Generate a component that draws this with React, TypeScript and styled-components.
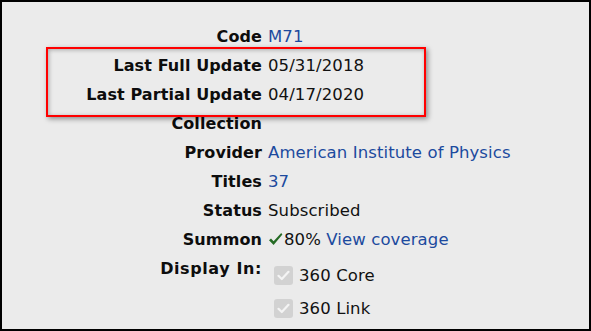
import React from "react";
import styled, { createGlobalStyle } from "styled-components";

const Global = createGlobalStyle`
  html, body { margin: 0; padding: 0; background: #ebebeb; }
  * { box-sizing: border-box; }
`;

const Frame = styled.div`
  position: relative;
  width: 591px;
  height: 331px;
  border: 2px solid #000;
  background: #ebebeb;
  font-family: "DejaVu Sans", Verdana, sans-serif;
  font-size: 16px;
  color: #111;
  overflow: hidden;
`;

const List = styled.div`
  display: flex;
  flex-direction: column;
  padding-top: 20px;
`;

const Row = styled.div`
  display: grid;
  grid-template-columns: 260px 1fr;
  column-gap: 6px;
  line-height: 29px;
  align-items: start;
`;

const Label = styled.div<{ $spread?: number }>`
  font-weight: bold;
  text-align: right;
  color: #0d0d0d;
  white-space: nowrap;
  letter-spacing: ${(p) => p.$spread ?? 0.1}px;
`;

const Value = styled.div`
  white-space: nowrap;
  display: flex;
  align-items: baseline;
  font-size: 16.5px;
  letter-spacing: 0.1px;
`;

const Link = styled.a`
  color: #1c4a9e;
  text-decoration: none;
`;

const Plain = styled.span`
  color: #111;
`;

const Check = styled.svg`
  width: 15px;
  height: 14px;
  margin-right: 1px;
  align-self: center;
  position: relative;
  top: -1px;
`;

const Options = styled.div`
  display: flex;
  flex-direction: column;
  padding-top: 7px;
  gap: 4px;
`;

const Option = styled.label`
  display: flex;
  align-items: center;
  gap: 6px;
  height: 29px;
  color: #111;
  font-size: 16.5px;
  letter-spacing: 0.1px;
`;

const Box = styled.span`
  width: 19px;
  height: 19px;
  border-radius: 3px;
  background: #d2d2d2;
  display: inline-flex;
  align-items: center;
  justify-content: center;
  margin-left: 6px;
`;

const Annotation = styled.div`
  position: absolute;
  left: 44px;
  top: 45px;
  width: 380px;
  height: 70px;
  border: 2px solid #ff0000;
  box-shadow: 2px 2px 5px rgba(0, 0, 0, 0.4),
    inset 1px 1px 4px rgba(0, 0, 0, 0.28);
  pointer-events: none;
`;

const CheckedBox = () => (
  <Box>
    <svg width="13" height="11" viewBox="0 0 13 11">
      <path
        d="M1.5 5.8 L4.8 9 L11.5 1.8"
        fill="none"
        stroke="#f4f4f4"
        strokeWidth="2.2"
        strokeLinecap="round"
        strokeLinejoin="round"
      />
    </svg>
  </Box>
);

export default function App() {
  return (
    <>
      <Global />
      <Frame>
        <List>
          <Row>
            <Label>Code</Label>
            <Value>
              <Link>M71</Link>
            </Value>
          </Row>
          <Row>
            <Label>Last Full Update</Label>
            <Value>
              <Plain>05/31/2018</Plain>
            </Value>
          </Row>
          <Row>
            <Label>Last Partial Update</Label>
            <Value>
              <Plain>04/17/2020</Plain>
            </Value>
          </Row>
          <Row>
            <Label>Collection</Label>
            <Value />
          </Row>
          <Row>
            <Label>Provider</Label>
            <Value>
              <Link>American Institute of Physics</Link>
            </Value>
          </Row>
          <Row>
            <Label>Titles</Label>
            <Value>
              <Link>37</Link>
            </Value>
          </Row>
          <Row>
            <Label>Status</Label>
            <Value>
              <Plain>Subscribed</Plain>
            </Value>
          </Row>
          <Row>
            <Label>Summon</Label>
            <Value>
              <Check viewBox="0 0 15 14">
                <path
                  d="M1 8.2 L3 6.4 L5.6 9.2 L13.2 1 L14.4 2.4 L5.6 13 Z"
                  fill="#256b24"
                />
              </Check>
              <Plain>80%</Plain>
              &nbsp;
              <Link>View coverage</Link>
            </Value>
          </Row>
          <Row>
            <Label $spread={0.6}>Display In:</Label>
            <Options>
              <Option>
                <CheckedBox />
                360 Core
              </Option>
              <Option>
                <CheckedBox />
                360 Link
              </Option>
            </Options>
          </Row>
        </List>
        <Annotation />
      </Frame>
    </>
  );
}
